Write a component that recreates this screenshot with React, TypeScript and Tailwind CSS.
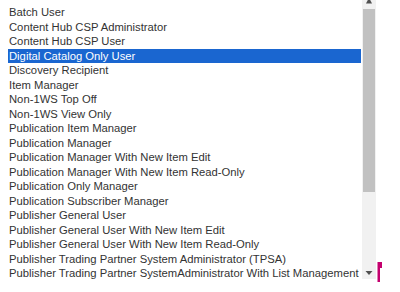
const roles = [
  "Batch User",
  "Content Hub CSP Administrator",
  "Content Hub CSP User",
  "Digital Catalog Only User",
  "Discovery Recipient",
  "Item Manager",
  "Non-1WS Top Off",
  "Non-1WS View Only",
  "Publication Item Manager",
  "Publication Manager",
  "Publication Manager With New Item Edit",
  "Publication Manager With New Item Read-Only",
  "Publication Only Manager",
  "Publication Subscriber Manager",
  "Publisher General User",
  "Publisher General User With New Item Edit",
  "Publisher General User With New Item Read-Only",
  "Publisher Trading Partner System Administrator (TPSA)",
  "Publisher Trading Partner SystemAdministrator With List Management",
];

const App = () => {
  const selected = 3;

  return (
    <div className="relative w-[400px] h-[292px] bg-white overflow-hidden font-['Liberation_Sans',Arial,sans-serif]">
      <div className="flex h-[279px]">
        {/* Options */}
        <div className="ml-[8px] w-[353px] pt-[5px] text-[11.25px]">
          {roles.map((role, i) => (
            <div
              key={role}
              className={
                i === selected
                  ? "h-[14.53px] leading-[14.53px] px-[1px] whitespace-nowrap overflow-hidden bg-[#1a66d0] text-white"
                  : "h-[14.53px] leading-[14.53px] px-[1px] whitespace-nowrap overflow-hidden text-[#333]"
              }
            >
              {role}
            </div>
          ))}
        </div>

        {/* Scrollbar */}
        <div className="ml-[1px] w-[14px] bg-[#f1f1f1] flex flex-col">
          <div className="h-[9px] flex justify-center">
            <svg width="14" height="9" viewBox="0 0 14 9">
              <polygon points="4,3.5 10,3.5 8.2,0 5.8,0" fill="#505050" />
            </svg>
          </div>
          <div className="mx-[1px] h-[183px] bg-[#c1c1c1]" />
          <div className="flex-1" />
          <div className="h-[13px] flex justify-center items-start">
            <svg width="14" height="13" viewBox="0 0 14 13">
              <polygon points="3.5,5 10.5,5 7,9" fill="#505050" />
            </svg>
          </div>
        </div>
      </div>

      {/* Pink marker */}
      <svg className="absolute left-[377px] top-[262px]" width="6" height="21" viewBox="0 0 6 21">
        <rect x="0.5" y="0" width="2.5" height="20" fill="#c4006e" />
        <rect x="3" y="0" width="2" height="6" fill="#c4006e" />
      </svg>
    </div>
  );
};

export default App;
